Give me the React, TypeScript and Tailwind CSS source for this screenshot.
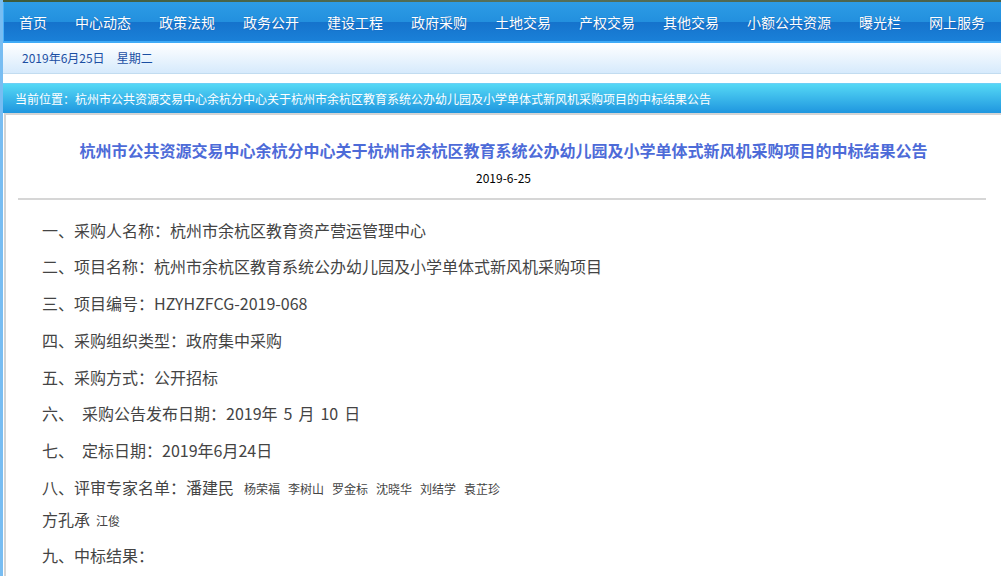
const NAV = [
  "首页",
  "中心动态",
  "政策法规",
  "政务公开",
  "建设工程",
  "政府采购",
  "土地交易",
  "产权交易",
  "其他交易",
  "小额公共资源",
  "曝光栏",
  "网上服务",
];

const EXPERTS = ["杨荣福", "李树山", "罗金标", "沈晓华", "刘结学", "袁芷珍"];

const font = { fontFamily: '"Noto Sans CJK SC", "Noto Sans", sans-serif' };

function Item({ children }: { children: React.ReactNode }) {
  return <p className="leading-[32px] mb-[4.7px] text-[16px] text-[#444]">{children}</p>;
}

export default function App() {
  return (
    <div className="flex w-[1001px] h-[576px] overflow-hidden bg-white" style={font}>
      <div className="w-[3px] shrink-0 bg-[#78bdf2]" />
      <div className="flex-1 min-w-0 flex flex-col">
        <div className="h-[2px] bg-gradient-to-r from-[#3d5a3a] via-[#56705a] to-[#4a6048]" />
        <nav className="h-[42px] flex items-center pl-[15px] gap-[28px] border-l border-b-2 border-l-[#48b0f8] border-b-[#3faaf6] bg-[linear-gradient(to_bottom,#2d9ce6_0%,#2390de_50%,#1573cc_52%,#1a80d8_100%)]">
          {NAV.map((n) => (
            <span key={n} className="text-white text-[14px] leading-none whitespace-nowrap [text-shadow:0_0_1px_rgba(0,40,120,0.5)]">
              {n}
            </span>
          ))}
        </nav>
        <div className="h-[31px] flex items-center pl-[19px] border-b border-[#c2dcf0] bg-[linear-gradient(to_bottom,#ffffff,#d6eafc)]">
          <span className="text-[12px] text-[#1b4fa3]">2019年6月25日</span>
          <span className="text-[12px] text-[#1b4fa3] ml-[12px]">星期二</span>
        </div>
        <div className="h-[10px] bg-white" />
        <div className="h-[30px] flex items-center pl-[12px] border-t border-[#6ccff6] bg-[linear-gradient(to_bottom,#55d8f5,#1f96df)]">
          <span className="text-white text-[12px] whitespace-nowrap">
            当前位置：杭州市公共资源交易中心余杭分中心关于杭州市余杭区教育系统公办幼儿园及小学单体式新风机采购项目的中标结果公告
          </span>
        </div>
        <div className="flex-1 ml-[1px] border-l-2 border-t-2 border-[#d4d4d4] bg-white">
          <h1 className="pt-[25px] text-center text-[16px] leading-[20px] font-bold text-[#4d6bd8]">
            杭州市公共资源交易中心余杭分中心关于杭州市余杭区教育系统公办幼儿园及小学单体式新风机采购项目的中标结果公告
          </h1>
          <div className="mt-[10px] text-center text-[12px] leading-[16px] text-black">2019-6-25</div>
          <hr className="mt-[12px] ml-[12px] mr-[15px] border-0 border-t-2 border-[#d6d6d6]" />
          <div className="pl-[36px] pt-[14px]">
            <Item>一、采购人名称：杭州市余杭区教育资产营运管理中心</Item>
            <Item>二、项目名称：杭州市余杭区教育系统公办幼儿园及小学单体式新风机采购项目</Item>
            <Item>三、项目编号：HZYHZFCG-2019-068</Item>
            <Item>四、采购组织类型：政府集中采购</Item>
            <Item>五、采购方式：公开招标</Item>
            <Item>
              六、<span className="ml-[8px]">采购公告发布日期：2019年<span className="mx-[6px]">5</span>月<span className="mx-[6px]">10</span>日</span>
            </Item>
            <Item>
              七、<span className="ml-[8px]">定标日期：2019年6月24日</span>
            </Item>
            <Item>
              八、评审专家名单：潘建民
              {EXPERTS.map((e, i) => (
                <span key={e} className={`text-[12px] leading-none ${i === 0 ? "ml-[10px]" : "ml-[8px]"}`}>
                  {e}
                </span>
              ))}
              <br />
              方孔承<span className="text-[12px] leading-none ml-[6px]">江俊</span>
            </Item>
            <Item>九、中标结果：</Item>
          </div>
        </div>
      </div>
    </div>
  );
}
